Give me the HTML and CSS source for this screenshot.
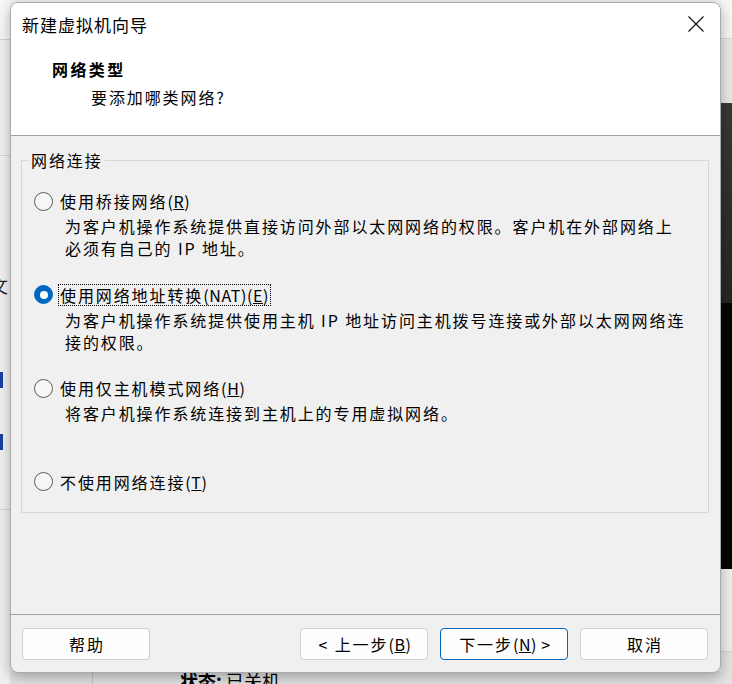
FILE: index.html
```html
<!DOCTYPE html>
<html lang="zh-CN">
<head>
    <meta charset="UTF-8">
    <meta name="viewport" content="width=device-width, initial-scale=1.0">
    <title>新建虚拟机向导</title>
    <link rel="stylesheet" href="styles.css">
</head>
<body>
    <!-- Main VMware window showing around the wizard -->
    <div class="backdrop">
        <div class="side-left">
            <div class="seg seg-top"></div>
            <div class="seg seg-tabs"></div>
            <div class="seg seg-list">
                <span class="cut-glyph">文</span>
                <span class="blue-mark"></span>
                <span class="blue-mark"></span>
            </div>
            <div class="seg seg-rest"></div>
        </div>
        <div class="center">
            <div class="center-fill"></div>
            <div class="status-row">
                <div class="status-side"></div>
                <div class="status-text"><b>状态:</b> 已关机</div>
            </div>
        </div>
        <div class="side-right">
            <div class="seg r-top"></div>
            <div class="seg r-gray"></div>
            <div class="seg r-dark"></div>
            <div class="seg r-black"></div>
            <div class="seg r-light"></div>
            <div class="seg r-rest"></div>
        </div>
    </div>

    <!-- Wizard dialog -->
    <div class="dialog">
        <div class="dlg-head">
            <div class="title-bar">
                <span class="title">新建虚拟机向导</span>
                <svg class="close" width="16" height="16" viewBox="0 0 16 16">
                    <path d="M0.5 0.5 L15.5 15.5 M15.5 0.5 L0.5 15.5" stroke="#1a1a1a" stroke-width="1.3" fill="none"/>
                </svg>
            </div>
            <div class="page-title">网络类型</div>
            <div class="page-sub">要添加哪类网络?</div>
        </div>

        <div class="dlg-body">
            <fieldset class="group">
                <legend>网络连接</legend>

                <div class="option">
                    <div class="opt-row">
                        <span class="radio"></span>
                        <span class="opt-label">使用桥接网络<span class="latin">(<u>R</u>)</span></span>
                    </div>
                    <div class="opt-desc">为客户机操作系统提供直接访问外部以太网网络的权限。客户机在外部网络上<br>必须有自己的 IP 地址。</div>
                </div>

                <div class="option">
                    <div class="opt-row">
                        <span class="radio checked"></span>
                        <span class="opt-label focused">使用网络地址转换<span class="latin">(NAT)(<u>E</u>)</span></span>
                    </div>
                    <div class="opt-desc">为客户机操作系统提供使用主机 IP 地址访问主机拨号连接或外部以太网网络连<br>接的权限。</div>
                </div>

                <div class="option">
                    <div class="opt-row">
                        <span class="radio"></span>
                        <span class="opt-label">使用仅主机模式网络<span class="latin">(<u>H</u>)</span></span>
                    </div>
                    <div class="opt-desc">将客户机操作系统连接到主机上的专用虚拟网络。</div>
                </div>

                <div class="option last">
                    <div class="opt-row">
                        <span class="radio"></span>
                        <span class="opt-label">不使用网络连接<span class="latin">(<u>T</u>)</span></span>
                    </div>
                </div>
            </fieldset>
        </div>

        <div class="dlg-foot">
            <button class="btn">帮助</button>
            <span class="spacer"></span>
            <button class="btn">&lt; 上一步<span class="latin">(<u>B</u>)</span></button>
            <button class="btn primary">下一步<span class="latin">(<u>N</u>) &gt;</span></button>
            <button class="btn">取消</button>
        </div>
    </div>
</body>
</html>
```

FILE: styles.css
```css
body {
    margin: 0;
    width: 732px;
    height: 684px;
    overflow: hidden;
    font-family: "Noto Sans CJK SC", "Noto Sans", sans-serif;
    font-size: 16px;
    color: #000;
    background-color: #f0f0f0;
}

/* Backdrop (main window behind the wizard) */
.backdrop {
    display: grid;
    grid-template-columns: 10px 1fr 11px;
    height: 684px;
}

.side-left,
.side-right {
    display: flex;
    flex-direction: column;
    overflow: hidden;
}

.seg {
    flex: none;
}

.seg-top {
    height: 39px;
    background-color: #f8f8f8;
    border-bottom: 1px solid #d6d6d6;
}

.seg-tabs {
    height: 115px;
    background-color: #f3f3f3;
    border-bottom: 1px solid #d6d6d6;
}

.seg-list {
    height: 354px;
    background-color: #f3f3f3;
    border-bottom: 1px solid #d6d6d6;
    display: flex;
    flex-direction: column;
    padding-top: 118px;
    box-sizing: border-box;
}

.cut-glyph {
    font-size: 18px;
    line-height: 22px;
    margin-left: -10px;
    color: #222;
}

.blue-mark {
    width: 3px;
    height: 16px;
    background-color: #1a3fa0;
    margin-top: 76px;
}

.blue-mark + .blue-mark {
    margin-top: 46px;
}

.seg-rest {
    flex: 1;
    background-color: #f0f0f0;
}

.center {
    display: flex;
    flex-direction: column;
    background-color: #f0f0f0;
}

.center-fill {
    flex: 1;
}

.status-row {
    height: 13px;
    display: flex;
    background-color: #e2e2e2;
}

.status-side {
    width: 82px;
    border-right: 1px solid #c4c4c4;
}

.status-text {
    margin-left: 87px;
    font-size: 18px;
    line-height: 22px;
    margin-top: -2px;
    white-space: nowrap;
}

.r-top {
    height: 38px;
    background-color: #f7f7f7;
    border-bottom: 1px solid #d8d8d8;
}

.r-gray {
    height: 64px;
    background-color: #e9e9e9;
}

.r-dark {
    height: 200px;
    background: linear-gradient(#383838, #262626);
}

.r-black {
    height: 266px;
    background-color: #050505;
}

.r-light {
    height: 82px;
    background-color: #efefef;
    border-bottom: 1px solid #d4d4d4;
}

.r-rest {
    flex: 1;
    background-color: #e3e3e3;
}

/* Dialog window */
.dialog {
    position: absolute;
    left: 10px;
    top: 2px;
    width: 711px;
    height: 671px;
    box-sizing: border-box;
    border: 1px solid #a9a9a9;
    border-radius: 8px;
    overflow: hidden;
    background-color: #f0f0f0;
    box-shadow: 0 4px 14px rgba(0, 0, 0, 0.3);
    display: flex;
    flex-direction: column;
    letter-spacing: 1.9px;
}

.latin {
    letter-spacing: 0.6px;
}

.dlg-head {
    height: 132px;
    flex: none;
    background-color: #fff;
    border-bottom: 1px solid #a0a0a0;
}

.title-bar {
    height: 42px;
    display: flex;
    align-items: center;
    justify-content: space-between;
    padding: 0 16px 0 11px;
}

.title {
    font-size: 17px;
    letter-spacing: 1px;
}

.close {
    display: block;
}

.page-title {
    margin-top: 13px;
    padding-left: 41px;
    font-size: 16px;
    font-weight: bold;
    line-height: 22px;
    letter-spacing: 2.4px;
}

.page-sub {
    margin-top: 6px;
    padding-left: 80px;
    line-height: 22px;
}

.dlg-body {
    height: 478px;
    flex: none;
    padding: 13px 11px 0 10px;
    box-sizing: border-box;
}

.group {
    margin: 0;
    padding: 19px 12px 19px 12px;
    border: 1px solid #d8d8d8;
}

.group legend {
    padding: 0 2px;
    margin-left: -5px;
    line-height: 22px;
}

.option {
    margin-bottom: 24.5px;
}

.option.last {
    margin-bottom: 0;
}

.opt-row {
    height: 22px;
    display: flex;
    align-items: center;
}

.radio {
    flex: none;
    width: 19px;
    height: 19px;
    box-sizing: border-box;
    border-radius: 50%;
    border: 1px solid #5c5c5c;
    background-color: #f6f6f6;
    margin-right: 5px;
    display: flex;
    align-items: center;
    justify-content: center;
}

.radio.checked {
    background-color: #0067c0;
    border-color: #0067c0;
}

.radio.checked::after {
    content: "";
    width: 8px;
    height: 8px;
    border-radius: 50%;
    background-color: #fff;
}

.opt-label {
    line-height: 20px;
    padding: 0 1px;
    border: 1px dotted transparent;
    white-space: nowrap;
}

.opt-label.focused {
    border-color: #000;
}

.opt-desc {
    margin-top: 3px;
    margin-left: 31px;
    min-height: 44px;
    line-height: 22px;
    white-space: nowrap;
}

/* Footer buttons */
.dlg-foot {
    flex: 1;
    border-top: 1px solid #a0a0a0;
    display: flex;
    align-items: flex-start;
    gap: 12px;
    padding: 13px 12px 0 11px;
}

.spacer {
    flex: 1;
}

.btn {
    width: 128px;
    height: 32px;
    margin: 0;
    padding: 0 0 0 2px;
    font-family: inherit;
    font-size: 16px;
    letter-spacing: 1.9px;
    color: #000;
    background-color: #fdfdfd;
    border: 1px solid #d0d0d0;
    border-radius: 4px;
    line-height: 30px;
}

.btn.primary {
    border-color: #0067c0;
}
```
